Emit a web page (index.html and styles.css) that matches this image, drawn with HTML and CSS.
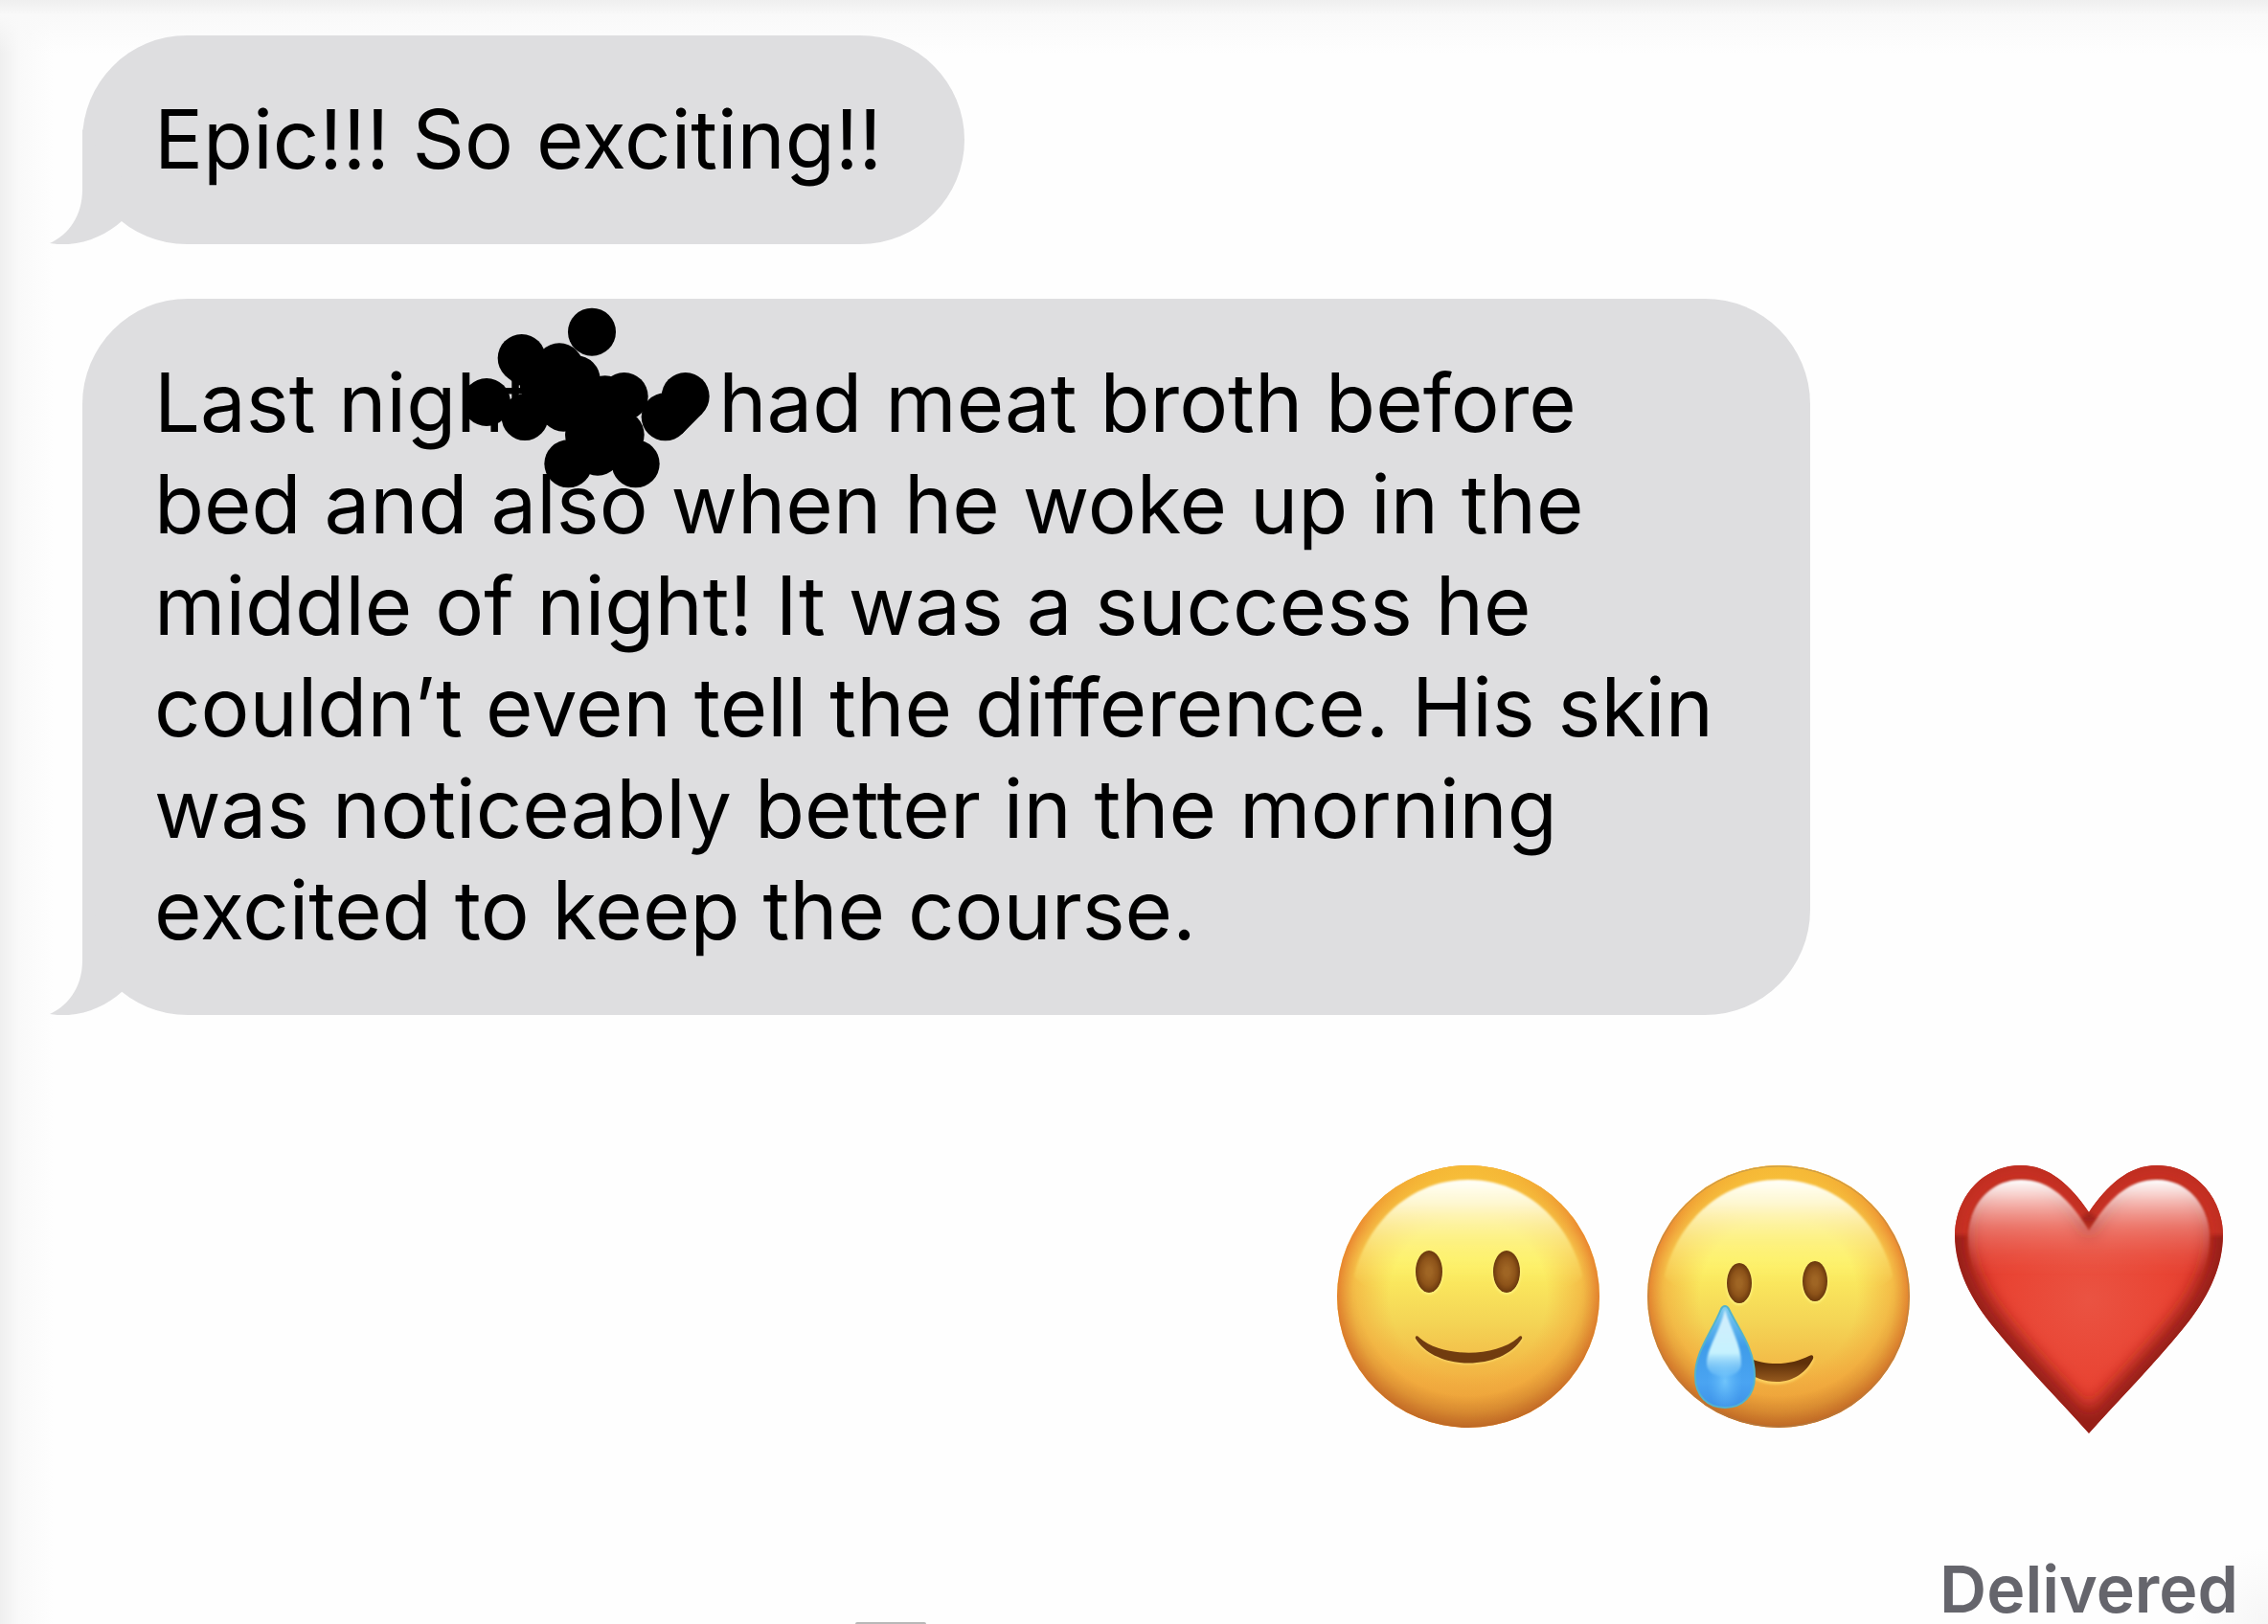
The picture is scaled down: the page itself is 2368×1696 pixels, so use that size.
FILE: index.html
```html
<!DOCTYPE html>
<html lang="en">
<head>
<meta charset="utf-8">
<meta name="viewport" content="width=device-width, initial-scale=1">
<title>Messages</title>
<link rel="stylesheet" href="styles.css">
</head>
<body>
<svg class="defs" width="0" height="0" aria-hidden="true">
  <defs>
    <linearGradient id="face" x1="0" y1="0" x2="0" y2="1">
      <stop offset="0" stop-color="#f8c43c"/>
      <stop offset=".36" stop-color="#fdf162"/>
      <stop offset=".6" stop-color="#f4d455"/>
      <stop offset=".82" stop-color="#f2b142"/>
      <stop offset="1" stop-color="#e79a36"/>
    </linearGradient>
    <radialGradient id="rim" cx=".5" cy=".5" r=".5">
      <stop offset=".6" stop-color="#f0a038" stop-opacity="0"/>
      <stop offset=".88" stop-color="#f0a038" stop-opacity=".6"/>
      <stop offset="1" stop-color="#ea8630"/>
    </radialGradient>
    <linearGradient id="topLight" x1="0" y1="0" x2="0" y2="1">
      <stop offset="0" stop-color="#f9c838" stop-opacity=".8"/>
      <stop offset=".25" stop-color="#f9c838" stop-opacity="0"/>
    </linearGradient>
    <linearGradient id="shade" x1="0" y1="0" x2="0" y2="1">
      <stop offset=".3" stop-color="#a85a20" stop-opacity="0"/>
      <stop offset="1" stop-color="#a85a20" stop-opacity=".7"/>
    </linearGradient>
    <radialGradient id="edge" cx=".5" cy=".45" r=".55">
      <stop offset=".78" stop-color="#fff" stop-opacity="0"/>
      <stop offset="1" stop-color="#fff"/>
    </radialGradient>
    <mask id="edgeMask"><circle cx="140" cy="140" r="137" fill="url(#edge)"/></mask>
    <linearGradient id="gloss" x1="0" y1="0" x2="0" y2="1">
      <stop offset="0" stop-color="#fffffa"/>
      <stop offset=".2" stop-color="#fffde0" stop-opacity=".9"/>
      <stop offset=".5" stop-color="#fef9a0" stop-opacity=".6"/>
      <stop offset=".9" stop-color="#fdf06a" stop-opacity="0"/>
    </linearGradient>
    <radialGradient id="eye">
      <stop offset=".2" stop-color="#9f6524"/>
      <stop offset=".65" stop-color="#8d5319"/>
      <stop offset="1" stop-color="#6a380d"/>
    </radialGradient>
    <linearGradient id="mouth" x1="0" y1="0" x2="0" y2="1">
      <stop offset=".3" stop-color="#5f3009"/>
      <stop offset="1" stop-color="#965a1e"/>
    </linearGradient>
    <linearGradient id="drop" x1="0" y1="0" x2="0" y2="1">
      <stop offset="0" stop-color="#7ccbf0"/>
      <stop offset=".4" stop-color="#3f9ce9"/>
      <stop offset=".75" stop-color="#4aa4f2"/>
      <stop offset="1" stop-color="#3e92e8"/>
    </linearGradient>
    <radialGradient id="dropGlow" cx=".5" cy=".74" r=".3">
      <stop offset="0" stop-color="#70c4fb"/>
      <stop offset="1" stop-color="#55b0f6" stop-opacity="0"/>
    </radialGradient>
    <linearGradient id="dropLight" x1="0" y1="0" x2="0" y2="1">
      <stop offset="0" stop-color="#d3edfc"/>
      <stop offset=".65" stop-color="#c6f2fe"/>
      <stop offset="1" stop-color="#7bcbfb" stop-opacity=".3"/>
    </linearGradient>
    <filter id="soft1" x="-20%" y="-20%" width="140%" height="140%"><feGaussianBlur stdDeviation="1"/></filter>
    <filter id="soft2" x="-20%" y="-20%" width="140%" height="140%"><feGaussianBlur stdDeviation="2"/></filter>
    <filter id="soft9" x="-20%" y="-20%" width="140%" height="140%"><feGaussianBlur stdDeviation="9"/></filter>
    <path id="heartShape" d="M140 49C121 21 99 0 69 0 28 0 0 35 0 73 0 108 17 141 42 171 72 208 108 244 140 280 172 244 208 208 238 171 263 141 280 108 280 73 280 35 252 0 211 0 181 0 159 21 140 49Z"/>
    <clipPath id="heartClip"><use href="#heartShape"/></clipPath>
    <radialGradient id="heartFill" cx=".5" cy=".5" r=".58">
      <stop offset="0" stop-color="#ea5342"/>
      <stop offset=".5" stop-color="#e94534"/>
      <stop offset="1" stop-color="#dd3729"/>
    </radialGradient>
    <linearGradient id="heartGloss" x1="0" y1="0" x2="0" y2="1">
      <stop offset="0" stop-color="#fff"/>
      <stop offset=".12" stop-color="#fdeeec" stop-opacity=".85"/>
      <stop offset=".4" stop-color="#f3b5ae" stop-opacity=".45"/>
      <stop offset=".8" stop-color="#ea6a5c" stop-opacity="0"/>
    </linearGradient>
    <g id="head">
      <circle cx="140" cy="140" r="137" fill="url(#face)"/>
      <circle cx="140" cy="140" r="137" fill="url(#rim)"/>
      <circle cx="140" cy="140" r="137" fill="url(#topLight)"/>
      <circle cx="140" cy="140" r="137" fill="url(#shade)" mask="url(#edgeMask)"/>
      <path d="M21 118C35 60 82 18 140 18S245 60 259 118C245 152 35 152 21 118Z" fill="url(#gloss)" filter="url(#soft1)"/>
    </g>
    <symbol id="tail" viewBox="0 0 150 120">
      <path d="M36 0V63C36 90 22 110 2 119 30 124 58 113 77 96V50Z"/>
    </symbol>
  </defs>
</svg>

<main class="thread">
  <section class="incoming">
    <div class="bubble">
      <p class="bubble-text">Epic!!! So exciting!!</p>
      <svg class="tail" aria-hidden="true"><use href="#tail"/></svg>
    </div>
    <div class="bubble">
      <p class="bubble-text">Last night<span class="name"></span> had meat broth before bed and also when he woke up in the middle of night! It was a success he couldn’t even tell the difference. His skin was noticeably better in the morning excited to keep the course.</p>
      <svg class="scribble" viewBox="0 0 960 690" aria-hidden="true">
        <path d="M254 222 372 250 425 288 500 320 575 342 563 460 492 515 400 430 300 360 200 245Z"/>
        <path d="M767 342 820 395 757 459 704 406ZM201 275 240 308 330 290 254 222Z"/>
        <circle cx="474" cy="140" r="75"/><circle cx="254" cy="222" r="75"/>
        <circle cx="372" cy="250" r="75"/><circle cx="425" cy="289" r="75"/>
        <circle cx="144" cy="360" r="75"/><circle cx="264" cy="407" r="73"/>
        <circle cx="385" cy="377" r="75"/><circle cx="515" cy="352" r="75"/>
        <circle cx="575" cy="342" r="75"/><circle cx="465" cy="462" r="75"/>
        <circle cx="563" cy="462" r="75"/><circle cx="492" cy="515" r="75"/>
        <circle cx="400" cy="553" r="75"/><circle cx="611" cy="553" r="75"/>
        <circle cx="767" cy="342" r="75"/><circle cx="704" cy="406" r="75"/>
        <circle cx="320" cy="305" r="72"/>
      </svg>
      <svg class="tail" aria-hidden="true"><use href="#tail"/></svg>
    </div>
  </section>

  <section class="outgoing">
    <div class="emojis">
      <svg class="emoji" viewBox="0 0 280 283" role="img" aria-label="Slightly smiling face">
        <use href="#head"/>
        <g fill="#fff27a" filter="url(#soft1)"><ellipse cx="99" cy="115" rx="15" ry="23"/><ellipse cx="180" cy="115" rx="15" ry="23"/></g>
        <g fill="url(#eye)"><ellipse cx="99" cy="114" rx="14" ry="22"/><ellipse cx="180" cy="114" rx="14" ry="22"/></g>
        <path d="M85 183C105 218 176 218 196 183" fill="none" stroke="#fbd96a" stroke-width="3" filter="url(#soft1)"/>
        <path d="M85 184C84 181 87 180 89 183 113 204 168 204 192 183 194 180 197 181 196 184 175 218 106 218 85 184Z" fill="#713c0f"/>
      </svg>
      <svg class="emoji" viewBox="0 0 280 283" role="img" aria-label="Smiling face with tear">
        <use href="#head"/>
        <circle cx="140" cy="140" r="136" fill="none" stroke="#a48558" stroke-opacity=".6"/>
        <g fill="#fff27a" filter="url(#soft1)"><ellipse cx="99" cy="127" rx="14" ry="22"/><ellipse cx="178" cy="125" rx="14" ry="22"/></g>
        <g fill="url(#eye)"><ellipse cx="99" cy="126" rx="13" ry="21"/><ellipse cx="178" cy="124" rx="13" ry="21"/></g>
        <path d="M108 220C130 237 165 232 176 204" fill="none" stroke="#fbd05e" stroke-width="4" filter="url(#soft1)"/>
        <path d="M106 203C130 214 154 211 172 202 175 200 177 202 176 205 169 219 156 229 138 229 125 229 115 225 104 217Z" fill="url(#mouth)"/>
        <path d="M80 153C82 149 86 149 88 153 98 174 115 194 115 223 115 244 102 256 84 256S53 244 53 223C53 197 70 178 80 153Z" fill="url(#drop)" stroke="#53b3cc" stroke-width="2"/>
        <path d="M80 153C82 149 86 149 88 153 98 174 115 194 115 223 115 244 102 256 84 256S53 244 53 223C53 197 70 178 80 153Z" fill="url(#dropGlow)"/>
        <path d="M84 153C90 174 101 190 101 210 101 228 65 228 65 210 65 194 79 176 84 153Z" fill="url(#dropLight)" filter="url(#soft1)"/>
      </svg>
      <svg class="emoji" viewBox="0 -3 280 283" role="img" aria-label="Red heart">
        <g clip-path="url(#heartClip)">
          <use href="#heartShape" fill="url(#heartFill)"/>
          <use href="#heartShape" fill="none" stroke="#941a12" stroke-width="30" filter="url(#soft9)"/>
          <path d="M140 49C121 21 99 0 69 0 28 0 0 35 0 73M140 49C159 21 181 0 211 0 252 0 280 35 280 73" fill="none" stroke="#e23a2b" stroke-opacity=".55" stroke-width="28" filter="url(#soft2)"/>
          <path d="M140 68C121 37 100 15 69 15 36 15 14 43 14 75 14 100 24 122 40 140H240C256 122 266 100 266 75 266 43 244 15 211 15 180 15 159 37 140 68Z" fill="url(#heartGloss)" filter="url(#soft1)"/>
        </g>
      </svg>
    </div>
    <p class="status">Delivered</p>
  </section>
  <div class="handle"></div>
</main>
</body>
</html>
```

FILE: styles.css
```css
* {
  box-sizing: border-box;
}

body {
  margin: 0;
  background: #fefefe;
  color: #000;
  font-family: Inter, "Liberation Sans", sans-serif;
}

p {
  margin: 0;
}

.defs {
  position: absolute;
}

.thread {
  position: relative;
  display: flex;
  flex-direction: column;
  min-height: 100vh;
  padding: 37px 0 4px;
  overflow: hidden;
  background:
    linear-gradient(to bottom, #efefef, #f9f9f9 16px, rgba(254, 254, 254, 0) 56px) top / 100% 56px no-repeat,
    linear-gradient(to right, #efefef, #f9f9f9 20px, rgba(254, 254, 254, 0) 56px) left / 56px 100% no-repeat,
    radial-gradient(circle at bottom right, #f6f6f6, rgba(254, 254, 254, 0) 80px);
}

.incoming {
  display: flex;
  flex-direction: column;
  align-items: flex-start;
  gap: 57px;
  padding: 0 86px;
}

.bubble {
  position: relative;
  max-width: 1804px;
  padding: 56px 86px 56px 75px;
  border-radius: 110px;
  background: #dedee0;
}

.bubble-text {
  font-size: 85px;
  line-height: 106px;
}

.name {
  display: inline-block;
  width: 172px;
}

.tail {
  position: absolute;
  left: -36px;
  bottom: 0;
  width: 150px;
  height: 120px;
  fill: #dedee0;
}

.scribble {
  position: absolute;
  left: 374px;
  top: -12px;
  width: 320px;
  height: 230px;
}

.outgoing {
  display: flex;
  flex: 1;
  flex-direction: column;
  align-items: flex-end;
  justify-content: space-between;
  padding: 154px 31px 0;
}

.emojis {
  display: flex;
  gap: 44px;
  padding-right: 16px;
}

.emoji {
  display: block;
  width: 280px;
  height: 283px;
}

.status {
  color: #65656c;
  font-size: 68px;
  font-weight: 600;
  line-height: 66px;
}

.handle {
  position: absolute;
  bottom: 0;
  left: 893px;
  width: 74px;
  height: 2px;
  border-radius: 2px 2px 0 0;
  background: #b8b8b8;
}
```
